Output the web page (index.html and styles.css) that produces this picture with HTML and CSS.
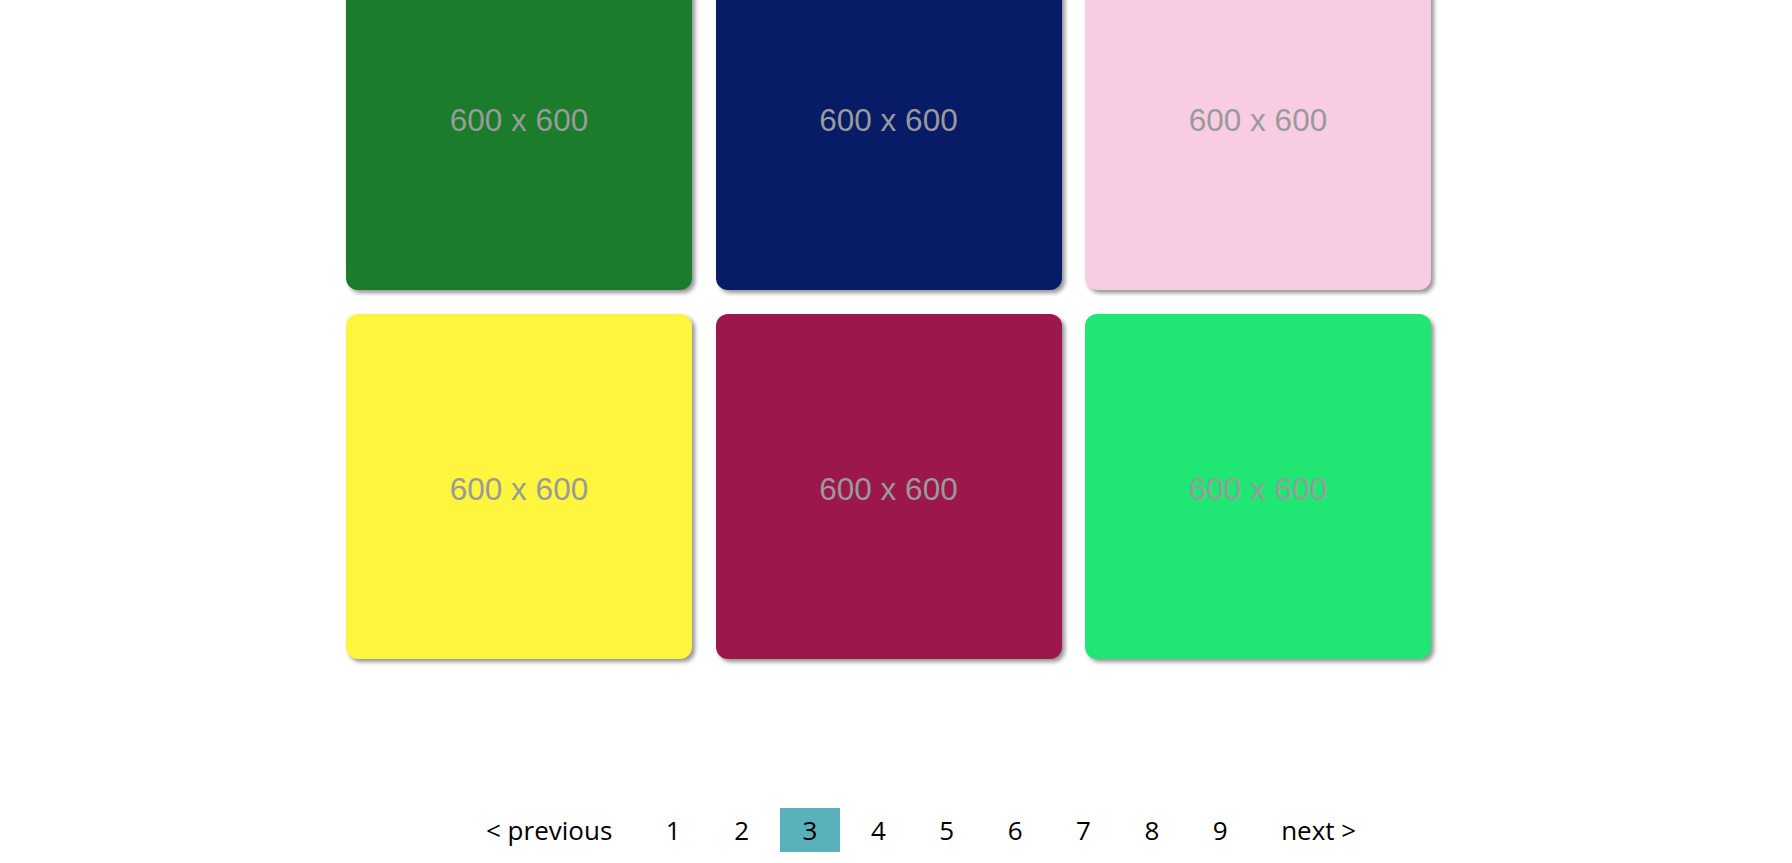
FILE: index.html
```html
<!DOCTYPE html>
<html>
<head>
<meta charset="utf-8">
<link rel="stylesheet" href="styles.css">
</head>
<body>
<div class="grid">
  <div class="card c1"><span>600 x 600</span></div>
  <div class="card c2"><span>600 x 600</span></div>
  <div class="card c3"><span>600 x 600</span></div>
  <div class="card c4"><span>600 x 600</span></div>
  <div class="card c5"><span>600 x 600</span></div>
  <div class="card c6"><span>600 x 600</span></div>
</div>
<ul class="pager">
  <li class="item">&lt; previous</li>
  <li class="item">1</li>
  <li class="item">2</li>
  <li class="item active">3</li>
  <li class="item">4</li>
  <li class="item">5</li>
  <li class="item">6</li>
  <li class="item">7</li>
  <li class="item">8</li>
  <li class="item">9</li>
  <li class="item">next &gt;</li>
</ul>
</body>
</html>
```
FILE: styles.css
```css
html, body {
  margin: 0;
  padding: 0;
  background: #ffffff;
  overflow: hidden;
}
.grid {
  display: grid;
  grid-template-columns: repeat(3, 346px);
  column-gap: 23.5px;
  row-gap: 24px;
  margin: -55px 0 0 346px;
}
.card {
  height: 345px;
  border-radius: 12px;
  box-shadow: 3px 3px 4px rgba(0, 0, 0, 0.42);
  display: flex;
  align-items: center;
  justify-content: center;
  font-family: "Liberation Sans", Arial, sans-serif;
  font-size: 31.5px;
  color: #9a9a9a;
}
.card span { position: relative; top: 3px; }
.c1 { background: #1b7d2b; }
.c2 { background: #071b66; }
.c3 { background: #f8cde4; }
.c4 { background: #fdf53e; }
.c5 { background: #9c174c; }
.c6 { background: #20e673; }
.pager {
  list-style: none;
  display: flex;
  gap: 7.5px;
  margin: 149px 0 0 0;
  padding: 0 0 0 463px;
  font-family: "Open Sans", sans-serif;
  font-size: 26px;
  color: #000;
}
.item {
  height: 44px;
  line-height: 44px;
  padding: 0 23px;
}
.active {
  background: #5bb1bb;
}
```
